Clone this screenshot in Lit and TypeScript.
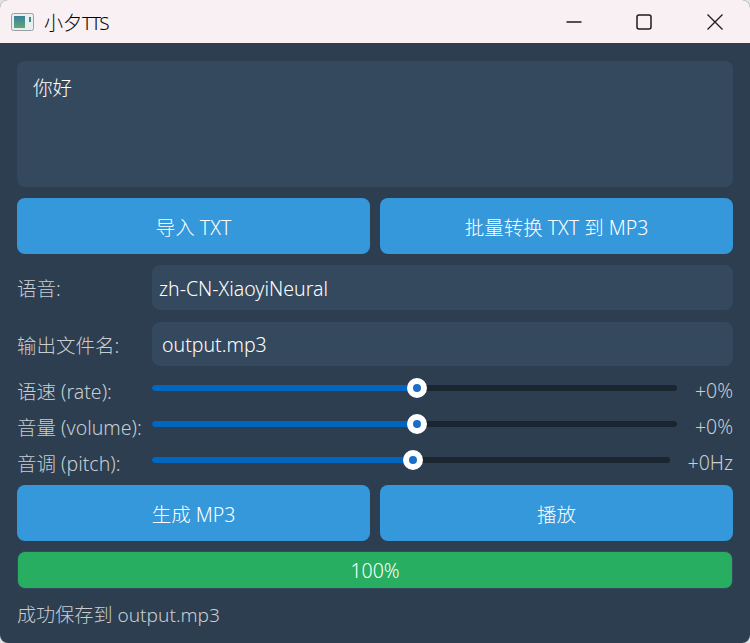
import { LitElement, html, css } from "lit";
import { customElement } from "lit/decorators.js";

@customElement("app-root")
export class AppRoot extends LitElement {
  static styles = css`
    :host { display: block; width: 750px; height: 643px; background: #dfe3e6; font-family: "Noto Sans", "Noto Sans CJK SC", sans-serif; font-size: 19.5px; font-weight: 300; }
    * { box-sizing: border-box; }
    .window { width: 750px; height: 643px; border-radius: 8px; overflow: hidden; display: flex; flex-direction: column; background: #2c3e50; }
    .titlebar { height: 43px; flex: none; background: #f9f0f3; display: flex; align-items: center; padding-left: 11px; color: #000; }
    .app-icon { width: 23px; height: 20px; flex: none; margin-right: 10px; }
    .title { font-size: 19px; flex: 1; }
    .tts { letter-spacing: -1.6px; }
    .ctl { width: 70.5px; height: 43px; display: flex; align-items: center; justify-content: center; }
    .ctl svg { width: 16px; height: 16px; fill: none; stroke: #1b1b1b; stroke-width: 1.3; }
    .body { flex: 1; display: flex; flex-direction: column; padding: 18px 17px 0; color: #fff; }
    .textarea { height: 126px; flex: none; background: #34495e; border-radius: 8px; padding: 13px 16px; line-height: 28px; color: #fff; }
    .btn-row { display: grid; grid-template-columns: 1fr 1fr; gap: 10px; margin-top: 11px; }
    .btn { height: 56px; background: #3498db; border-radius: 8px; display: flex; align-items: center; justify-content: center; color: #fff; }
    .form-row { display: flex; align-items: center; }
    .label { width: 135px; flex: none; color: #c8cdd1; white-space: nowrap; }
    .field { flex: 1; background: #34495e; border-radius: 8px; display: flex; align-items: center; color: #fff; }
    .voice { margin-top: 11px; }
    .voice .field { height: 45px; padding: 1px 0 0 7px; }
    .output { margin-top: 12px; }
    .output .field { height: 44px; padding-left: 10px; }
    .sliders { display: flex; flex-direction: column; gap: 10px; margin-top: 9px; }
    .slider-row { height: 26px; display: flex; align-items: center; }
    .slider-row .label { padding-top: 4px; }
    .value { margin-left: 18px; padding-top: 4px; color: #c8cdd1; white-space: nowrap; }
    .track { flex: 1; height: 6px; border-radius: 3px; background: #1a252f; position: relative; }
    .fill { height: 100%; background: #0066c0; border-radius: 3px 0 0 3px; }
    .thumb { position: absolute; top: 50%; width: 20px; height: 20px; margin: -10px 0 0 -10px; border-radius: 50%; background: #1a6dc8; border: 6px solid #fff; }
    .bottom { margin-top: 12px; }
    .progress { height: 38px; margin-top: 10px; border-radius: 8px; background: #27ae60; border: 1px solid #34495e; display: flex; align-items: center; justify-content: center; color: #fff; }
    .status { margin-top: 11px; color: #c8cdd1; font-size: 19.1px; }
  `;

  private sliders = [
    { label: "语速 (rate):", value: "+0%", pct: 50.5 },
    { label: "音量 (volume):", value: "+0%", pct: 50.5 },
    { label: "音调 (pitch):", value: "+0Hz", pct: 50.4 },
  ];

  render() {
    return html`
      <div class="window">
        <div class="titlebar">
          <svg class="app-icon" viewBox="0 0 23 20">
            <defs><linearGradient id="g" x1="0" y1="0" x2="0" y2="1"><stop offset="0" stop-color="#3d7f9c"/><stop offset="1" stop-color="#5da878"/></linearGradient></defs>
            <rect x="0.5" y="1.5" width="22" height="17" rx="2" fill="#e9eef0" stroke="#9aa0a5"/>
            <rect x="3" y="4" width="11" height="12" fill="url(#g)"/>
            <rect x="18" y="5" width="2" height="5" fill="#3d8a8a"/>
          </svg>
          <span class="title">小夕<span class="tts">TTS</span></span>
          <div class="ctl"><svg viewBox="0 0 16 16"><path d="M0.5 8H15.5"/></svg></div>
          <div class="ctl"><svg viewBox="0 0 16 16"><rect x="1" y="1" width="14" height="14" rx="2" stroke-width="1.5"/></svg></div>
          <div class="ctl"><svg viewBox="0 0 16 16"><path d="M0.5 0.5L15.5 15.5M15.5 0.5L0.5 15.5"/></svg></div>
        </div>
        <div class="body">
          <div class="textarea">你好</div>
          <div class="btn-row">
            <div class="btn">导入 TXT</div>
            <div class="btn">批量转换 TXT 到 MP3</div>
          </div>
          <div class="form-row voice"><span class="label">语音:</span><div class="field">zh-CN-XiaoyiNeural</div></div>
          <div class="form-row output"><span class="label">输出文件名:</span><div class="field">output.mp3</div></div>
          <div class="sliders">
            ${this.sliders.map(s => html`
              <div class="slider-row">
                <span class="label">${s.label}</span>
                <div class="track">
                  <div class="fill" style="width:${s.pct}%"></div>
                  <div class="thumb" style="left:${s.pct}%"></div>
                </div>
                <span class="value">${s.value}</span>
              </div>`)}
          </div>
          <div class="btn-row bottom">
            <div class="btn">生成 MP3</div>
            <div class="btn">播放</div>
          </div>
          <div class="progress">100%</div>
          <div class="status">成功保存到 output.mp3</div>
        </div>
      </div>
    `;
  }
}
